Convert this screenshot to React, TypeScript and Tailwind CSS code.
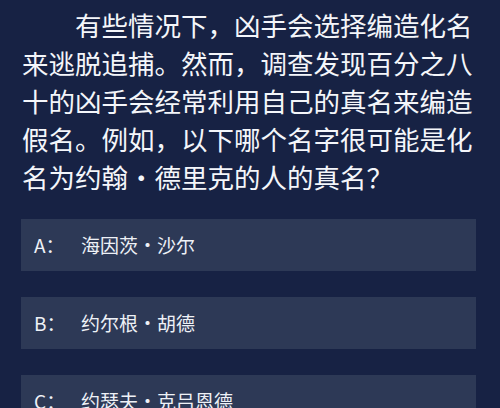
const options = [
  { key: 'A', name: '海因茨·沙尔' },
  { key: 'B', name: '约尔根·胡德' },
  { key: 'C', name: '约瑟夫·克吕恩德' },
];

export default function App() {
  return (
    <div
      className="w-[500px] h-[408px] overflow-hidden bg-[#172244] text-white"
      style={{ fontFamily: '"Noto Sans CJK SC", "Noto Sans", sans-serif' }}
    >
      <p className="px-[22px] pt-[6px] text-[26.5px] leading-[38px] indent-[53px] text-[#f4f6fa]">
        有些情况下，凶手会选择编造化名来逃脱追捕。然而，调查发现百分之八十的凶手会经常利用自己的真名来编造假名。例如，以下哪个名字很可能是化名为约翰·德里克的人的真名？
      </p>

      <div className="mt-[23px] flex flex-col gap-[26px] pl-[21px] pr-[24px]">
        {options.map((o) => (
          <div key={o.key} className="h-[52px] flex items-center bg-[#2d3956] pl-[13px] text-[19px] text-[#eef1f6]">
            <span className="w-[47px] shrink-0">{o.key}：</span>
            <span>{o.name}</span>
          </div>
        ))}
      </div>
    </div>
  );
}
